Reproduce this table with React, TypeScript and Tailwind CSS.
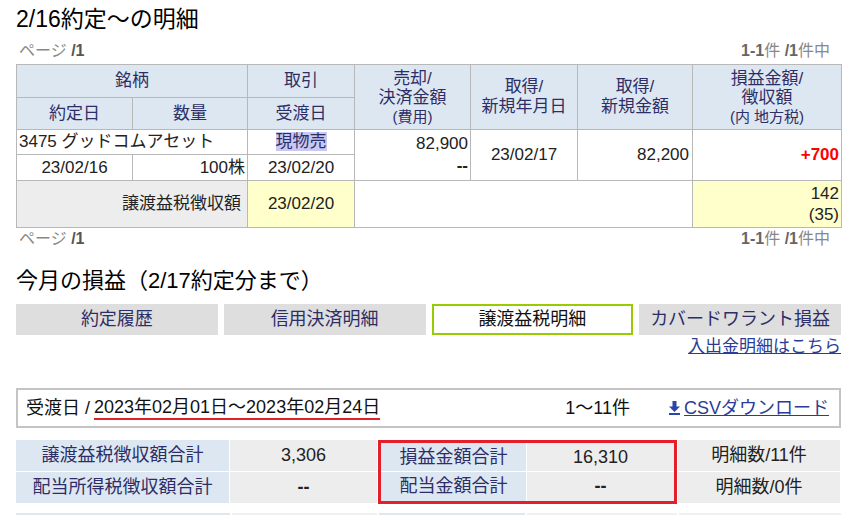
import React from 'react';

const th = 'border border-[#b8b8b8] bg-[#dde7f2] p-0 font-normal text-[#2e2e66] text-center align-middle';
const td = 'border border-[#b8b8b8] p-0 align-middle text-[#222]';

function Pager() {
  return (
    <div className="flex items-center justify-between pl-[3px] pr-[11px] text-[16px] text-[#888]">
      <span>
        ページ <b className="text-[#555]">/1</b>
      </span>
      <span>
        <b className="text-[#666]">1-1</b>件 <b className="text-[#666]">/1</b>件中
      </span>
    </div>
  );
}

function DownloadIcon() {
  return (
    <svg width="11" height="14" viewBox="0 0 11 14" className="mr-[4px]">
      <rect x="3.5" y="0" width="4" height="6" fill="#2a45a8" />
      <path d="M0 5.5 H11 L5.5 11 Z" fill="#2a45a8" />
      <rect x="0" y="12" width="11" height="2" fill="#2a45a8" />
    </svg>
  );
}

export default function App() {
  const tabs = ['約定履歴', '信用決済明細', '譲渡益税明細', 'カバードワラント損益'];

  return (
    <div className="w-[853px] h-[529px] overflow-hidden bg-white pl-4 font-['Liberation_Sans','Noto_Sans_CJK_JP',sans-serif]">
      <div className="w-[825px]">
        <div className="h-[38px] flex items-center text-[23px] text-black">2/16約定～の明細</div>
        <div className="h-[26px] flex flex-col justify-center">
          <Pager />
        </div>

        <table className="w-[825px] table-fixed border-collapse text-[17px] leading-[20px]">
          <colgroup>
            <col className="w-[116px]" />
            <col className="w-[115px]" />
            <col className="w-[107px]" />
            <col className="w-[116px]" />
            <col className="w-[107px]" />
            <col className="w-[115px]" />
            <col className="w-[149px]" />
          </colgroup>
          <thead>
            <tr className="h-[33px]">
              <th colSpan={2} className={th}>銘柄</th>
              <th className={th}>取引</th>
              <th rowSpan={2} className={`${th} leading-[19px]`}>
                売却/<br />決済金額<br />
                <span className="text-[15px] leading-[17px]">(費用)</span>
              </th>
              <th rowSpan={2} className={`${th} leading-[20px]`}>取得/<br />新規年月日</th>
              <th rowSpan={2} className={`${th} leading-[20px]`}>取得/<br />新規金額</th>
              <th rowSpan={2} className={`${th} leading-[19px]`}>
                損益金額/<br />徴収額<br />
                <span className="text-[15px] leading-[17px]">(内 地方税)</span>
              </th>
            </tr>
            <tr className="h-[32px]">
              <th className={th}>約定日</th>
              <th className={th}>数量</th>
              <th className={th}>受渡日</th>
            </tr>
          </thead>
          <tbody>
            <tr className="h-[25px]">
              <td colSpan={2} className={`${td} pl-[2px] text-left`}>3475 グッドコムアセット</td>
              <td className={`${td} text-center`}>
                <span className="bg-[#c8c8f4] text-[#2e2e66]">現物売</span>
              </td>
              <td rowSpan={2} className={`${td} pr-[2px] text-right leading-[22px]`}>
                82,900<br />
                <b>--</b>
              </td>
              <td rowSpan={2} className={`${td} text-center`}>23/02/17</td>
              <td rowSpan={2} className={`${td} pr-[3px] text-right`}>82,200</td>
              <td rowSpan={2} className={`${td} pr-[2px] text-right font-bold text-[#ff0000]`}>+700</td>
            </tr>
            <tr className="h-[26px]">
              <td className={`${td} text-center`}>23/02/16</td>
              <td className={`${td} pr-[2px] text-right`}>100株</td>
              <td className={`${td} text-center`}>23/02/20</td>
            </tr>
            <tr className="h-[47px]">
              <td colSpan={2} className={`${td} bg-[#ededed] pr-[6px] text-right text-[#2e2e66]`}>譲渡益税徴収額</td>
              <td className={`${td} bg-[#ffffcc] text-center`}>23/02/20</td>
              <td colSpan={3} className={td}></td>
              <td className={`${td} bg-[#ffffcc] pr-[2px] text-right leading-[21px]`}>
                142<br />(35)
              </td>
            </tr>
          </tbody>
        </table>

        <div className="h-[22px] flex flex-col justify-center">
          <Pager />
        </div>

        <div className="h-[54px] pt-[6px] flex items-center text-[22px] text-black">今月の損益（2/17約定分まで）</div>

        <div className="grid grid-cols-4 gap-[6px] h-[28px]">
          {tabs.map((t, i) =>
            i === 2 ? (
              <div key={t} className="flex items-center justify-center border-2 border-[#99cc00] bg-white text-[18px] text-[#111]">
                {t}
              </div>
            ) : (
              <div key={t} className="flex items-center justify-center bg-[#dedede] text-[18px] text-[#2e2e66]">
                {t}
              </div>
            )
          )}
        </div>

        <div className="h-[30px] flex items-center justify-end">
          <a href="#" className="text-[17px] text-[#2a3d96] underline">入出金明細はこちら</a>
        </div>

        <div className="mt-[26px] h-[40px] flex items-center border-2 border-[#c4c4c4] pl-[8px] pr-[10px] text-[18px] text-[#111]">
          <span>受渡日 / </span>
          <span className="ml-[4px] border-b-2 border-[#e0202a] leading-[22px]">2023年02月01日～2023年02月24日</span>
          <span className="flex-1" />
          <span>1～11件</span>
          <a href="#" className="ml-[39px] flex items-center text-[#2a3d96]">
            <DownloadIcon />
            <span className="underline">CSVダウンロード</span>
          </a>
        </div>

        <div className="mt-[12px] flex text-[18px]">
          <div className="grid grid-cols-[213px_147px] grid-rows-[31px_31px] gap-[1px]">
            <div className="flex items-center justify-center bg-[#dde7f2] text-[#2e2e66]">譲渡益税徴収額合計</div>
            <div className="flex items-center justify-center bg-[#ededed] text-[#222]">3,306</div>
            <div className="flex items-center justify-center bg-[#dde7f2] text-[#2e2e66]">配当所得税徴収額合計</div>
            <div className="flex items-center justify-center bg-[#ededed] font-bold text-[#222]">--</div>
          </div>
          <div className="ml-[1px] border-[3px] border-[#e41e2a] grid grid-cols-[145px_147px] grid-rows-[28px_29px] gap-[1px] bg-white">
            <div className="flex items-center justify-center bg-[#dde7f2] text-[#2e2e66]">損益金額合計</div>
            <div className="flex items-center justify-center bg-[#ededed] text-[#222]">16,310</div>
            <div className="flex items-center justify-center bg-[#dde7f2] text-[#2e2e66]">配当金額合計</div>
            <div className="flex items-center justify-center bg-[#ededed] font-bold text-[#222]">--</div>
          </div>
          <div className="ml-[1px] grid grid-cols-[162px] grid-rows-[31px_31px] gap-[1px]">
            <div className="flex items-center justify-center bg-[#ededed] text-[#222]">明細数/11件</div>
            <div className="flex items-center justify-center bg-[#ededed] text-[#222]">明細数/0件</div>
          </div>
        </div>

        <div className="mt-[9px] flex gap-[2px] h-[2px]">
          <div className="w-[214px] bg-[#dde7f2]" />
          <div className="w-[145px] bg-[#f0f0f0]" />
          <div className="w-[146px] bg-[#dde7f2]" />
          <div className="w-[150px] bg-[#f0f0f0]" />
          <div className="w-[162px] bg-[#f0f0f0]" />
        </div>
      </div>
    </div>
  );
}
